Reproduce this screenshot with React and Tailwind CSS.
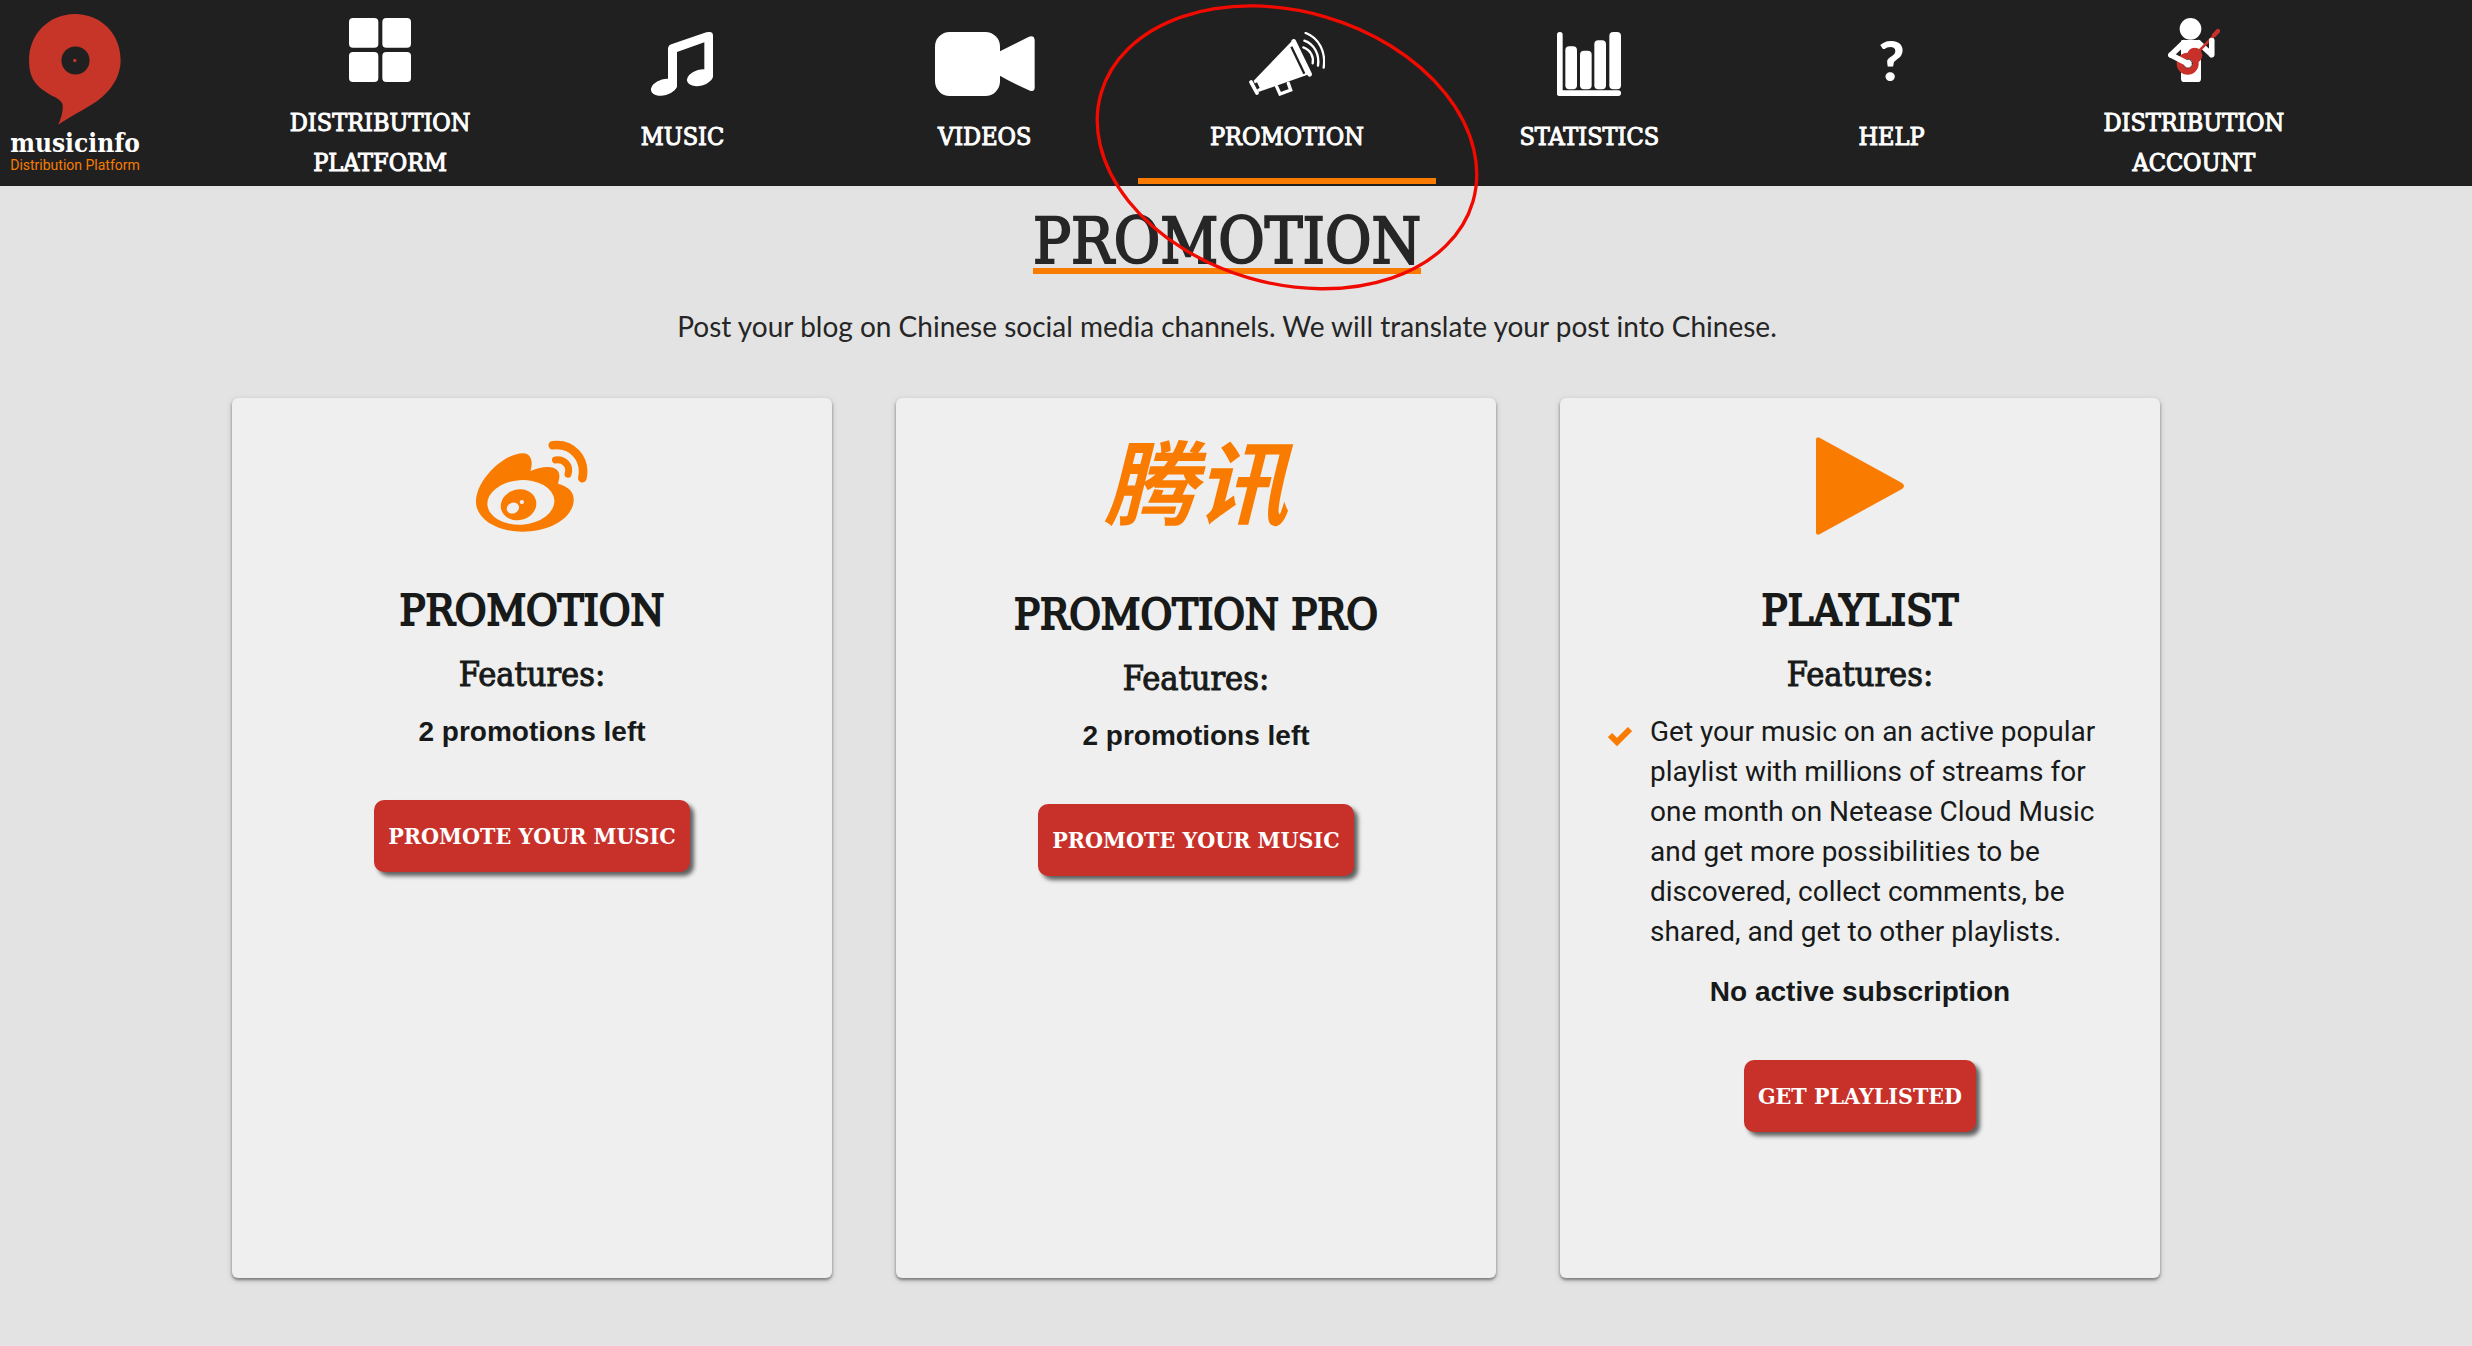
import React from 'react';

/* ── Nav icons ── */
const GridIcon = () => (
  <svg viewBox="1044 54 186 192" className="h-16 w-[62px] fill-white" aria-hidden="true">
    <rect x="1044" y="54" width="88" height="89" rx="12" />
    <rect x="1144" y="54" width="86" height="89" rx="12" />
    <rect x="1044" y="156" width="88" height="90" rx="12" />
    <rect x="1144" y="156" width="86" height="90" rx="12" />
  </svg>
);

const MusicIcon = () => (
  <svg viewBox="156 96 186 192" className="h-16 w-[62px] fill-white" aria-hidden="true">
    <path d="M207 262V147Q207 137 217 133L322 97Q342 92 342 106V232H316V127L234 156V262Z" />
    <ellipse cx="195" cy="262" rx="40" ry="24" transform="rotate(-15 195 262)" />
    <ellipse cx="303" cy="233" rx="40" ry="24" transform="rotate(-15 303 233)" />
  </svg>
);

const VideoIcon = () => (
  <svg viewBox="1008 96 300 192" className="h-16 w-[100px] fill-white" aria-hidden="true">
    <rect x="1008" y="96" width="195" height="192" rx="44" />
    <path d="M1200 155L1290 110Q1307 105 1307 122V262Q1307 277 1293 272Q1245 252 1200 226Z" />
  </svg>
);

const MegaphoneIcon = () => (
  <svg viewBox="510 96 228 192" className="h-16 w-[76px] fill-none stroke-white" strokeLinecap="round" aria-hidden="true">
    <path d="M524 242L638 124L692 222L538 276Z" className="fill-white" stroke="none" />
    <path d="M644 124L692 223" strokeWidth="14" />
    <path d="M516 246L534 279" strokeWidth="11" />
    <path d="M637 140L676 221" className="stroke-[#202020]" strokeWidth="7" strokeLinecap="butt" />
    <path d="M530 249L538 266" className="stroke-[#202020]" strokeWidth="9" strokeLinecap="butt" />
    <path d="M593 260L603 282L635 270L628 250" strokeWidth="10" />
    <path d="M680 99C720 114 741 156 734 203" strokeWidth="7" />
    <path d="M676 122C706 132 722 164 717 197" strokeWidth="7" />
    <path d="M673 142C694 149 705 170 701 190" strokeWidth="7" />
  </svg>
);

const StatisticsIcon = () => (
  <svg viewBox="174 96 192 192" className="size-16 fill-white" aria-hidden="true">
    <rect x="174" y="96" width="17" height="192" rx="8" />
    <rect x="174" y="271" width="192" height="17" rx="8" />
    <rect x="199" y="139" width="35" height="129" rx="12" />
    <rect x="243" y="152" width="35" height="116" rx="12" />
    <rect x="286" y="121" width="35" height="147" rx="12" />
    <rect x="331" y="96" width="35" height="172" rx="12" />
  </svg>
);

const HelpIcon = () => (
  <span className="block font-[Lato,sans-serif] text-[56px] font-black leading-[56px] text-white" aria-hidden="true">
    ?
  </span>
);

const GuitaristIcon = () => (
  <svg viewBox="504 54 156 192" className="h-16 w-[52px] fill-none" strokeLinecap="round" strokeLinejoin="round" aria-hidden="true">
    <g className="fill-white">
      <circle cx="571.5" cy="86.5" r="32.5" />
      <path d="M546 120H596Q603 120 603 130V236Q603 246 593 246H553Q543 246 543 236V123Z" />
    </g>
    <path d="M552 128L513 165" className="stroke-white" strokeWidth="17" />
    <path d="M596 128L635 164V121" className="stroke-white" strokeWidth="16" />
    <g className="fill-[#c8302a]">
      <circle cx="563" cy="191" r="33" />
      <circle cx="584" cy="166" r="23" />
    </g>
    <path d="M592 158L645 104" className="stroke-[#c8302a]" strokeWidth="8" />
    <path d="M642 106L654 93" className="stroke-[#c8302a]" strokeWidth="13" />
    <circle cx="564" cy="191" r="13" className="fill-white stroke-[#202020]" strokeWidth="2" />
    <path d="M513 165L564 191" className="stroke-white" strokeWidth="17" />
    <path d="M635 164V121" className="stroke-white" strokeWidth="16" />
  </svg>
);

/* ── Card icons ── */
const WeiboIcon = () => (
  <svg viewBox="285 150 337 275" className="h-[92px] w-28 fill-[#f97b00]" strokeLinecap="round" aria-hidden="true">
    <path d="M285 335C285 270 368 189 427 189C450 190 458 212 449 242C492 225 536 224 536 258C536 268 532 274 532 281C565 290 579 307 579 328C579 385 505 425 425 425C345 425 285 385 285 335Z" />
    <ellipse cx="420" cy="337" rx="101" ry="67" transform="rotate(-4 420 337)" className="fill-[#efefef]" />
    <ellipse cx="413" cy="344" rx="54" ry="46" transform="rotate(-15 413 344)" />
    <ellipse cx="396" cy="354" rx="19" ry="16" transform="rotate(-25 396 354)" className="fill-[#efefef]" />
    <circle cx="423" cy="336" r="6.5" className="fill-[#efefef]" />
    <g className="fill-none stroke-[#f97b00]">
      <path d="M516 165C575 158 617 205 605 264" strokeWidth="26" />
      <path d="M524 209C551 206 570 226 562 252" strokeWidth="21" />
    </g>
  </svg>
);

const TencentMark = () => (
  <span lang="zh" className="font-['Noto_Sans_CJK_SC',sans-serif] text-[92px] font-bold italic leading-[96px] text-[#f97b00]">
    腾讯
  </span>
);

const PlayIcon = () => (
  <svg viewBox="0 0 88 98" className="h-[98px] w-[88px] fill-[#f97b00]" aria-hidden="true">
    <path d="M0 2Q1 -1 4 1L86 46Q90 49 86 52L4 97Q1 99 0 96Z" />
  </svg>
);

const CheckIcon = () => (
  <svg viewBox="0 0 24 20" className="h-5 w-6 shrink-0 fill-none stroke-[#f97b00]" strokeWidth="6" aria-hidden="true">
    <path d="M2 9L9 16L22 3" />
  </svg>
);

const NAV = [
  { lines: ['DISTRIBUTION', 'PLATFORM'], Icon: GridIcon },
  { lines: ['MUSIC'], Icon: MusicIcon },
  { lines: ['VIDEOS'], Icon: VideoIcon },
  { lines: ['PROMOTION'], Icon: MegaphoneIcon, active: true },
  { lines: ['STATISTICS'], Icon: StatisticsIcon },
  { lines: ['HELP'], Icon: HelpIcon },
  { lines: ['DISTRIBUTION', 'ACCOUNT'], Icon: GuitaristIcon },
];

const CARDS = [
  {
    title: 'PROMOTION',
    Icon: WeiboIcon,
    status: '2 promotions left',
    cta: 'PROMOTE YOUR MUSIC',
  },
  {
    title: 'PROMOTION PRO',
    Icon: TencentMark,
    iconBox: 'h-[180px] pb-5',
    status: '2 promotions left',
    cta: 'PROMOTE YOUR MUSIC',
  },
  {
    title: 'PLAYLIST',
    Icon: PlayIcon,
    features: [
      'Get your music on an active popular playlist with millions of streams for one month on Netease Cloud Music and get more possibilities to be discovered, collect comments, be shared, and get to other playlists.',
    ],
    status: 'No active subscription',
    cta: 'GET PLAYLISTED',
  },
];

/* Hand-drawn style ring round the active nav item */
const Highlight = () => (
  <svg
    viewBox="45 0 1170 885"
    className="pointer-events-none absolute left-1/2 top-0 z-10 h-[295px] w-[390px] max-w-none -translate-x-1/2 fill-none stroke-[#f00a00]"
    aria-hidden="true"
  >
    <ellipse cx="630" cy="442" rx="581" ry="408" transform="rotate(16.3 630 442)" strokeWidth="10" />
  </svg>
);

const Logo = () => (
  <a href="#home" className="flex w-[150px] shrink-0 flex-col items-center pt-3.5">
    <svg viewBox="88 42 275 332" className="h-[111px] w-[92px]" aria-hidden="true">
      <path
        d="M175 373Q189 345 189 318Q188 303 168 292C115 264 88 242 88 180C88 100 150 42 225 42C302 42 362 100 362 180C362 235 325 280 285 307C255 327 215 347 175 373Z"
        className="fill-[#c73529]"
      />
      <circle cx="227" cy="181" r="42" className="fill-[#202020]" />
      <circle cx="225" cy="181" r="5" className="fill-[#c73529]" />
    </svg>
    <span className="mt-1 text-[26px] font-bold leading-7 text-white">musicinfo</span>
    <span className="font-[Roboto,sans-serif] text-sm leading-4 text-[#f97b00]">Distribution Platform</span>
  </a>
);

const NavItem = ({ lines, Icon, active }) => (
  <li className="relative px-0.5">
    <a
      href={`#${lines.join('-').toLowerCase()}`}
      aria-current={active ? 'page' : undefined}
      className={`flex h-[184px] flex-col items-center border-b-[6px] ${lines.length > 1 ? 'pt-[18px]' : 'pt-8'} ${active ? 'border-[#f97b00]' : 'border-transparent'}`}
    >
      <span className="mb-[21px] h-16 shrink-0">
        <Icon />
      </span>
      <span className="text-center text-[25px] leading-10 text-white [-webkit-text-stroke:1px]">
        {lines.map(line => (
          <span key={line} className="block">{line}</span>
        ))}
      </span>
    </a>
    {active && <Highlight />}
  </li>
);

const Card = ({ title, Icon, iconBox = 'h-44', features, status, cta }) => (
  <article className="flex min-h-[880px] flex-col items-center rounded-md bg-[#efefef] px-12 pb-24 text-[#181a19] shadow-[0_2px_6px_rgba(0,0,0,0.16),0_2px_3px_rgba(0,0,0,0.4)]">
    <div className={`flex items-center justify-center ${iconBox}`}>
      <Icon />
    </div>
    <h2 className="text-[43px] leading-[72px] [-webkit-text-stroke:2px]">{title}</h2>
    <h3 className="text-[34px] leading-[56px] [-webkit-text-stroke:1px]">Features:</h3>
    {features && (
      <ul className="mt-2.5 font-[Roboto,sans-serif] text-[28px] leading-10">
        {features.map(text => (
          <li key={text} className="flex gap-[18px]">
            <span className="flex h-12 items-center"><CheckIcon /></span>
            <span>{text}</span>
          </li>
        ))}
      </ul>
    )}
    <p className={`${features ? 'mt-5' : 'mt-2.5'} font-['Liberation_Sans',sans-serif] text-[28px] font-bold leading-10`}>{status}</p>
    <button
      type="button"
      className="mt-12 h-[72px] rounded-[10px] bg-[#c8302a] px-3.5 text-[23px] font-bold text-white shadow-[4px_4px_4px_rgba(0,0,0,0.6)]"
    >
      {cta}
    </button>
  </article>
);

const App = () => (
  <div className="min-h-screen bg-[#e3e3e3] font-['DejaVu_Serif_Condensed','DejaVu_Serif',serif]">
    <header className="flex h-[186px] bg-[#202020]">
      <Logo />
      <nav className="grow pl-[79px] pr-[127px]">
        <ul className="grid grid-cols-7">
          {NAV.map(item => (
            <NavItem key={item.lines.join(' ')} {...item} />
          ))}
        </ul>
      </nav>
    </header>

    <main>
      <div className="flex flex-col items-center pr-[18px] pt-[30px]">
        <h1 className="border-b-[6px] border-[#f97b00] text-[63px] leading-[52px] text-[#262626] [-webkit-text-stroke:2px]">
          PROMOTION
        </h1>
        <p className="mt-8 font-[Lato,sans-serif] text-[28px] leading-10 text-[#262626]">
          Post your blog on Chinese social media channels. We will translate your post into Chinese.
        </p>
      </div>

      <section className="mt-[52px] grid grid-cols-3 gap-16 pb-16 pl-[232px] pr-[312px]">
        {CARDS.map(card => (
          <Card key={card.title} {...card} />
        ))}
      </section>
    </main>
  </div>
);

export default App;
